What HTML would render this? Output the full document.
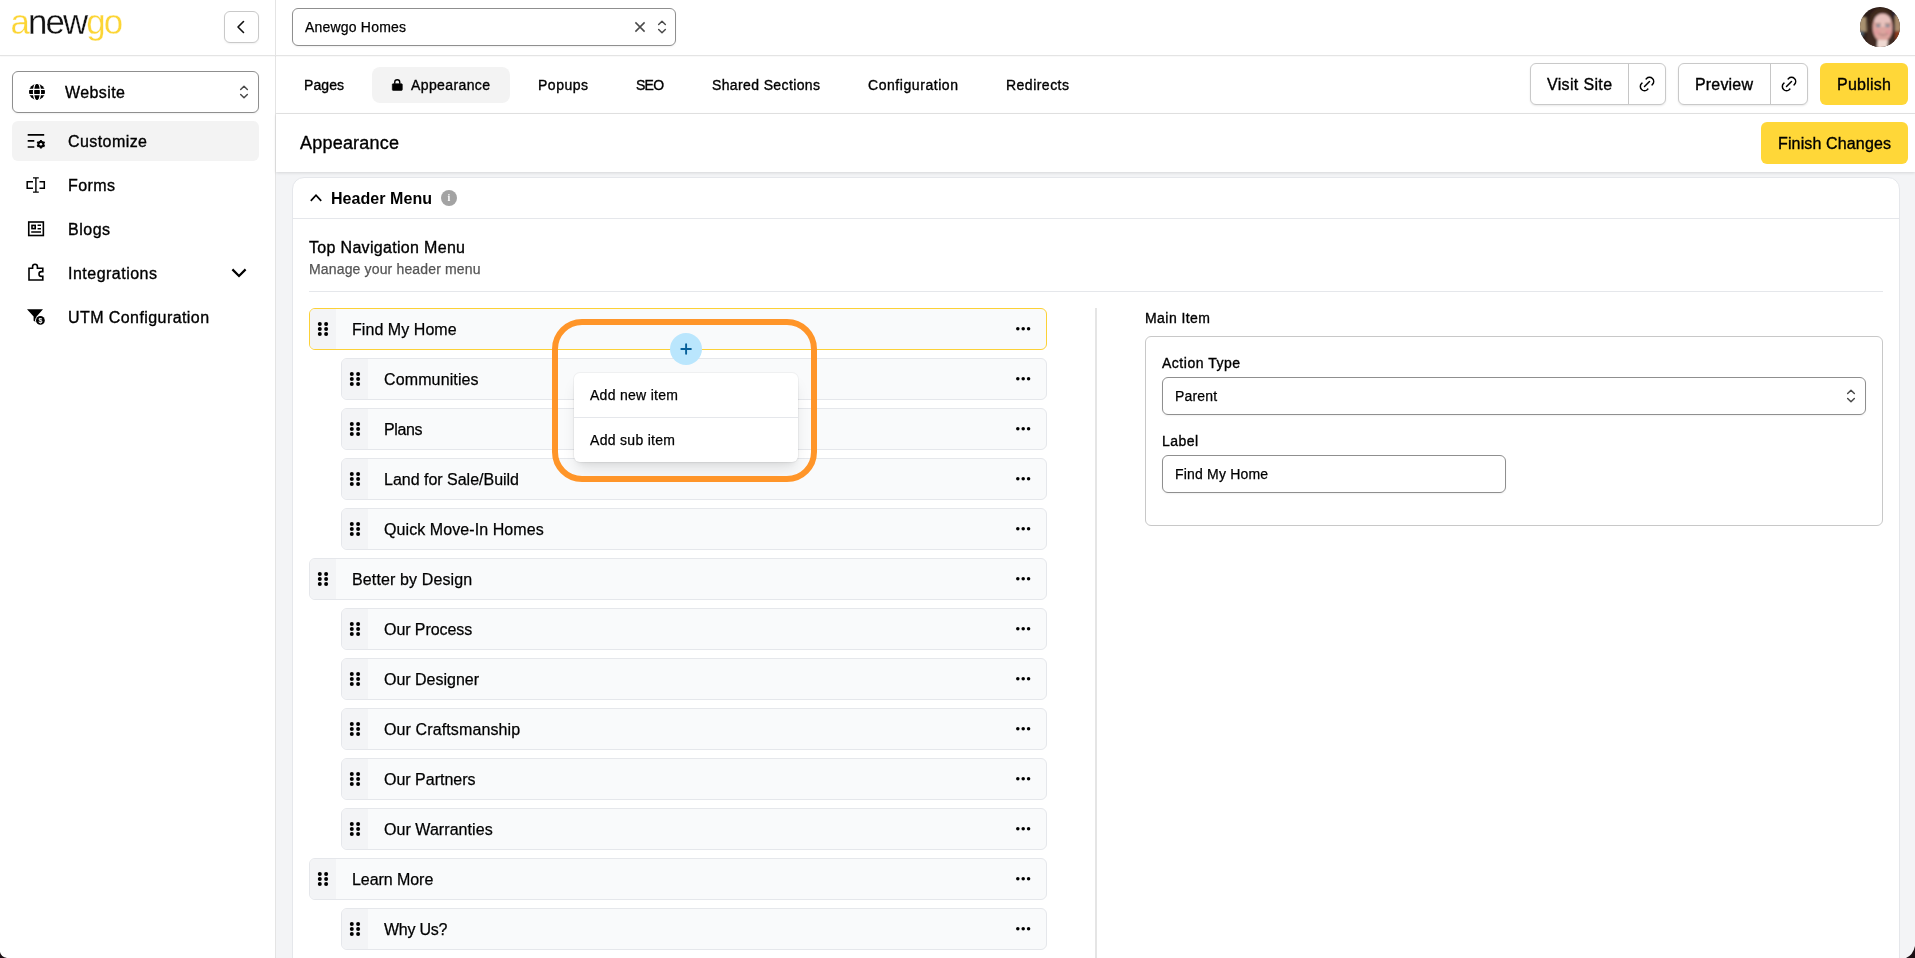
<!DOCTYPE html>
<html lang="en"><head><meta charset="utf-8"><title>Anewgo - Appearance</title>
<style>
*{box-sizing:border-box;margin:0;padding:0}
html,body{width:1915px;height:958px;overflow:hidden;background:#fff}
body{font-family:"Liberation Sans",sans-serif;color:#000;position:relative}
.t{position:absolute;white-space:nowrap;will-change:transform}
.abs{position:absolute}
.row{position:absolute;height:42px;background:#f9fafb;border:1px solid #e5e7eb;border-radius:6px;overflow:hidden}
.row .h{position:absolute;left:0;top:0;bottom:0;width:26px;background:#f3f4f6}
.row.sel{border-color:#fcd137}
svg{position:absolute;overflow:visible}
</style></head><body>

<div class="abs" style="left:276px;top:172px;width:1639px;height:786px;background:#f3f4f6"></div>
<div class="abs" style="left:292px;top:177px;width:1608px;height:800px;background:#fff;border:1px solid #e5e7eb;border-radius:12px"></div>
<div class="abs" style="left:293px;top:218px;width:1606px;height:1px;background:#e5e7eb"></div>
<div class="abs" style="left:0;top:0;width:276px;height:958px;background:#fff;border-right:1px solid #e4e4e4"></div>
<div class="abs" style="left:0;top:55px;width:1915px;height:1px;background:#e4e4e4;box-shadow:0 1px 1px rgba(0,0,0,.03)"></div>
<svg style="left:0;top:0;will-change:transform" width="140" height="56"><text x="10.5" y="34.4" font-family="Liberation Sans, sans-serif" font-size="34.8" textLength="112.5" lengthAdjust="spacing" stroke="#fff" stroke-width="0.3"><tspan fill="#fcd535">a</tspan><tspan fill="#111">new</tspan><tspan fill="#fcd535">go</tspan></text></svg>
<div class="abs" style="left:224px;top:11px;width:35px;height:32px;border:1px solid #c9c9c9;border-radius:6px;box-shadow:0 1px 2px rgba(0,0,0,.06);background:#fff"></div>
<svg style="left:233px;top:19px" width="16" height="16" viewBox="0 0 16 16"><path d="M10.5 2.5 L5 8 L10.5 13.5" fill="none" stroke="#111" stroke-width="1.6" stroke-linecap="round" stroke-linejoin="round"/></svg>
<div class="abs" style="left:12px;top:71px;width:247px;height:42px;border:1px solid #8f8f8f;border-radius:6px;box-shadow:0 1px 2px rgba(0,0,0,.06);background:#fff"></div>
<div class="t " style="left:65px;top:80.80px;font-size:16px;line-height:24px;letter-spacing:0.413px;-webkit-text-stroke:0.35px #000;color:#000;">Website</div>
<div class="abs" style="left:12px;top:121px;width:247px;height:40px;background:#f3f3f3;border-radius:6px"></div>
<div class="t " style="left:68px;top:129.80px;font-size:16px;line-height:24px;letter-spacing:0.425px;-webkit-text-stroke:0.35px #000;color:#000;">Customize</div>
<div class="t " style="left:68px;top:173.80px;font-size:16px;line-height:24px;letter-spacing:0.410px;-webkit-text-stroke:0.35px #000;color:#000;">Forms</div>
<div class="t " style="left:68px;top:217.80px;font-size:16px;line-height:24px;letter-spacing:0.500px;-webkit-text-stroke:0.35px #000;color:#000;">Blogs</div>
<div class="t " style="left:68px;top:261.80px;font-size:16px;line-height:24px;letter-spacing:0.491px;-webkit-text-stroke:0.35px #000;color:#000;">Integrations</div>
<div class="t " style="left:68px;top:305.80px;font-size:16px;line-height:24px;letter-spacing:0.422px;-webkit-text-stroke:0.35px #000;color:#000;">UTM Configuration</div>
<div class="abs" style="left:292px;top:8px;width:384px;height:38px;border:1px solid #8f8f8f;border-radius:6px;box-shadow:0 1px 2px rgba(0,0,0,.06);background:#fff"></div>
<div class="t " style="left:305px;top:17.30px;font-size:14px;line-height:21px;letter-spacing:0.196px;-webkit-text-stroke:0.25px #000;color:#000;">Anewgo Homes</div>
<svg style="left:1860px;top:7px" width="40" height="40" viewBox="0 0 40 40"><defs><clipPath id="av"><circle cx="20" cy="20" r="20"/></clipPath><filter id="bl" x="-20%" y="-20%" width="140%" height="140%"><feGaussianBlur stdDeviation="0.8"/></filter></defs><g clip-path="url(#av)"><rect width="40" height="40" fill="#2c1d18"/><g filter="url(#bl)"><rect x="-2" y="10" width="8.5" height="15" fill="#a8916f"/><rect x="-2" y="24" width="6" height="5" fill="#4a5a66"/><rect x="34.5" y="8" width="8" height="18" fill="#a98a6a"/><rect x="35" y="24" width="6" height="9" fill="#8a3a1e"/><rect x="32.8" y="5" width="1.8" height="22" fill="#1f2440"/><path d="M7 42 C5 24 8 3 21 2.5 C34 3 35 24 34 42Z" fill="#3f2a22"/><ellipse cx="22.6" cy="20.6" rx="9.9" ry="14.2" fill="#dda59f"/><ellipse cx="22.6" cy="13.5" rx="8.2" ry="6.5" fill="#e8c2bd"/><ellipse cx="17" cy="25" rx="3" ry="2.6" fill="#e09a9c"/><ellipse cx="28.5" cy="25" rx="3" ry="2.6" fill="#e09a9c"/><path d="M17.5 33 L28 33 L27 42 L17 42Z" fill="#efd9d2"/><path d="M12 22 Q12 6 22 5.5 Q33 6 33 22 L35 14 Q30 0 21 1 Q10 2 9 16Z" fill="#41291f"/><rect x="16" y="18.2" width="4.6" height="1.7" rx="0.8" fill="#5f7f95"/><rect x="25.2" y="18.2" width="4.6" height="1.7" rx="0.8" fill="#5f7f95"/><path d="M15.5 16.8 H21 M24.8 16.8 H30.2" stroke="#6b4a40" stroke-width="0.8"/><path d="M18.5 26.8 Q23 30.6 27.8 26.8 Q23 28.4 18.5 26.8Z" fill="#f6f0ee" stroke="#b47f7a" stroke-width="0.9"/></g></g></svg>
<div class="abs" style="left:276px;top:113px;width:1639px;height:1px;background:#e4e4e4"></div>
<div class="abs" style="left:372px;top:67px;width:138px;height:36px;background:#f3f3f3;border-radius:8px"></div>
<div class="t " style="left:304px;top:75.30px;font-size:14px;line-height:21px;letter-spacing:0.078px;-webkit-text-stroke:0.35px #000;color:#000;">Pages</div>
<div class="t " style="left:411px;top:75.30px;font-size:14px;line-height:21px;letter-spacing:0.386px;-webkit-text-stroke:0.35px #000;color:#000;">Appearance</div>
<div class="t " style="left:538px;top:75.30px;font-size:14px;line-height:21px;letter-spacing:0.508px;-webkit-text-stroke:0.35px #000;color:#000;">Popups</div>
<div class="t " style="left:636px;top:75.30px;font-size:14px;line-height:21px;letter-spacing:-0.770px;-webkit-text-stroke:0.35px #000;color:#000;">SEO</div>
<div class="t " style="left:712px;top:75.30px;font-size:14px;line-height:21px;letter-spacing:0.374px;-webkit-text-stroke:0.35px #000;color:#000;">Shared Sections</div>
<div class="t " style="left:868px;top:75.30px;font-size:14px;line-height:21px;letter-spacing:0.558px;-webkit-text-stroke:0.35px #000;color:#000;">Configuration</div>
<div class="t " style="left:1006px;top:75.30px;font-size:14px;line-height:21px;letter-spacing:0.481px;-webkit-text-stroke:0.35px #000;color:#000;">Redirects</div>
<div class="abs" style="left:1530px;top:63px;width:136px;height:42px;border:1px solid #c9c9c9;border-radius:6px;box-shadow:0 1px 2px rgba(0,0,0,.09);background:#fff;"></div>
<div class="abs" style="left:1628px;top:64px;width:1px;height:40px;background:#c6c6c6"></div>
<div class="abs" style="left:1678px;top:63px;width:130px;height:42px;border:1px solid #c9c9c9;border-radius:6px;box-shadow:0 1px 2px rgba(0,0,0,.09);background:#fff;"></div>
<div class="abs" style="left:1770px;top:64px;width:1px;height:40px;background:#c6c6c6"></div>
<div class="abs" style="left:1820px;top:63px;width:88px;height:42px;border-radius:6px;background:#ffd738"></div>
<div class="t " style="left:1547px;top:72.80px;font-size:16px;line-height:24px;letter-spacing:0.342px;-webkit-text-stroke:0.35px #000;color:#000;">Visit Site</div>
<div class="t " style="left:1695px;top:72.80px;font-size:16px;line-height:24px;letter-spacing:0.173px;-webkit-text-stroke:0.35px #000;color:#000;">Preview</div>
<div class="t " style="left:1837px;top:72.80px;font-size:16px;line-height:24px;letter-spacing:0.253px;-webkit-text-stroke:0.35px #000;color:#000;">Publish</div>
<div class="abs" style="left:276px;top:114px;width:1639px;height:58px;background:#fff;box-shadow:0 1px 3px rgba(0,0,0,.12)"></div>
<div class="t " style="left:300px;top:130.30px;font-size:18px;line-height:27px;letter-spacing:0.210px;-webkit-text-stroke:0.35px #000;color:#000;">Appearance</div>
<div class="abs" style="left:1761px;top:122px;width:147px;height:42px;border-radius:6px;background:#ffd738"></div>
<div class="t " style="left:1778px;top:131.80px;font-size:16px;line-height:24px;letter-spacing:0.138px;-webkit-text-stroke:0.35px #000;color:#000;">Finish Changes</div>
<svg style="left:29px;top:84px" width="16" height="16" viewBox="0 0 16 16"><circle cx="8" cy="7.9" r="8" fill="#000"/><g stroke="#fff" stroke-width="1.25" fill="none"><path d="M-1 5.35H17M-1 10.5H17"/><ellipse cx="8" cy="7.9" rx="3.5" ry="9.2"/></g></svg>
<svg style="left:234px;top:82px" width="20" height="20" viewBox="0 0 24 24"><path d="M8 9l4 -4l4 4M16 15l-4 4l-4 -4" fill="none" stroke="#4a4a4a" stroke-width="1.75" stroke-linecap="round" stroke-linejoin="round"/></svg>
<svg style="left:27px;top:133px" width="19" height="16" viewBox="0 0 19 16"><path d="M0.7 1.8H17.2M0.7 7.9H7.3M0.7 14H7.3" stroke="#000" stroke-width="1.7" fill="none"/><g transform="translate(13.9,11.2)"><circle r="2.6" fill="none" stroke="#000" stroke-width="1.9"/><path d="M0 -4.3V4.3M-3.72 -2.15L3.72 2.15M-3.72 2.15L3.72 -2.15" stroke="#000" stroke-width="1.9"/><circle r="1.3" fill="#f3f3f3"/></g></svg>
<svg style="left:26px;top:177px" width="20" height="16" viewBox="0 0 20 16"><g fill="none" stroke="#000" stroke-width="1.5"><path d="M7 4.7H1.2V11.3H7M13.5 4.7H18.3V11.3H13.5"/><path d="M9.9 0.8V15.2M7 0.9H12.8M7 15.1H12.8" stroke-width="1.4"/></g></svg>
<svg style="left:27px;top:220.3px" width="18" height="17" viewBox="0 0 18 17"><g fill="none" stroke="#000"><rect x="1.75" y="2" width="14.6" height="13.5" stroke-width="1.6"/><rect x="5" y="5.4" width="3.2" height="3.2" stroke-width="1.6"/><path d="M10.6 5.3H14M10.6 8.8H14M4.2 12H14" stroke-width="1.4"/></g></svg>
<svg style="left:27px;top:263px" width="18" height="18" viewBox="0 0 18 18"><path d="M2 17 V5.2 H5.6 V3.6 A2.4 2.4 0 0 1 10.4 3.6 V5.2 H15.8 V8.6 H14.4 A2.4 2.4 0 0 0 14.4 13.4 H15.8 V17 Z" fill="none" stroke="#000" stroke-width="1.6" stroke-linejoin="miter"/></svg>
<svg style="left:231px;top:267px" width="16" height="12" viewBox="0 0 16 12"><path d="M1.4 2.4 L8 9 L14.6 2.4" fill="none" stroke="#000" stroke-width="2.2"/></svg>
<svg style="will-change:transform;left:26px;top:308px" width="20" height="18" viewBox="0 0 20 18"><path d="M1 1.3 H17 L10.6 8.6 V14.6 L7.6 12.8 V8.6 Z" fill="#000"/><circle cx="14.4" cy="12.4" r="5.3" fill="#fff"/><circle cx="14.4" cy="12.4" r="4.4" fill="#000"/><text x="14.4" y="15" font-size="7" font-weight="700" fill="#fff" text-anchor="middle" font-family="Liberation Sans, sans-serif">$</text></svg>
<svg style="left:634px;top:21px" width="12" height="12" viewBox="0 0 12 12"><path d="M1.4 1.4 L10.6 10.6 M10.6 1.4 L1.4 10.6" fill="none" stroke="#4a4a4a" stroke-width="1.5"/></svg>
<svg style="left:652px;top:17px" width="20" height="20" viewBox="0 0 24 24"><path d="M8 9l4 -4l4 4M16 15l-4 4l-4 -4" fill="none" stroke="#4a4a4a" stroke-width="1.75" stroke-linecap="round" stroke-linejoin="round"/></svg>
<svg style="left:391px;top:78px" width="13" height="14" viewBox="0 0 13 14"><rect x="1.3" y="5.7" width="10" height="6.7" rx="0.9" fill="#000" stroke="#000" stroke-width="0.6"/><path d="M3.75 5.8 V4.25 A2.5 2.5 0 0 1 8.75 4.25 V5.8" fill="none" stroke="#000" stroke-width="1.4"/></svg>
<svg style="left:1637px;top:74px" width="20" height="20" viewBox="0 0 24 24"><g fill="none" stroke="#000" stroke-width="1.8" stroke-linecap="round" stroke-linejoin="round"><path d="M9 15l6 -6"/><path d="M11 6l.463 -.536a5 5 0 0 1 7.071 7.072l-.534 .464"/><path d="M13 18l-.397 .534a5.068 5.068 0 0 1 -7.127 0a4.972 4.972 0 0 1 0 -7.071l.524 -.463"/></g></svg>
<svg style="left:1779px;top:74px" width="20" height="20" viewBox="0 0 24 24"><g fill="none" stroke="#000" stroke-width="1.8" stroke-linecap="round" stroke-linejoin="round"><path d="M9 15l6 -6"/><path d="M11 6l.463 -.536a5 5 0 0 1 7.071 7.072l-.534 .464"/><path d="M13 18l-.397 .534a5.068 5.068 0 0 1 -7.127 0a4.972 4.972 0 0 1 0 -7.071l.524 -.463"/></g></svg>
<svg style="left:308px;top:190px" width="16" height="16" viewBox="0 0 16 16"><path d="M2.8 10.8 L8 5.2 L13.2 10.8" fill="none" stroke="#000" stroke-width="1.7"/></svg>
<div class="abs" style="left:441px;top:190px;width:16px;height:16px;border-radius:50%;background:#a3a3a3"></div>
<div class="t" style="left:441px;top:190px;width:16px;height:16px;line-height:16px;text-align:center;font-family:'Liberation Serif',serif;font-weight:700;font-size:10px;color:#fff">i</div>
<div class="t " style="left:331px;top:186.80px;font-size:16px;line-height:24px;letter-spacing:0.052px;font-weight:700;color:#000;">Header Menu</div>
<div class="t " style="left:309px;top:235.80px;font-size:16px;line-height:24px;letter-spacing:0.316px;-webkit-text-stroke:0.35px #000;color:#000;">Top Navigation Menu</div>
<div class="t " style="left:309px;top:259.30px;font-size:14px;line-height:21px;letter-spacing:0.153px;-webkit-text-stroke:0.25px #555;color:#555;">Manage your header menu</div>
<div class="abs" style="left:309px;top:291px;width:1574px;height:1px;background:#e5e7eb"></div>
<div class="abs" style="left:1095px;top:308px;width:2px;height:650px;background:#e5e5e5"></div>
<div class="row sel" style="left:309px;top:308px;width:738px"><div class="h"></div><svg style="left:7px;top:13px" width="12" height="14" viewBox="0 0 12 14"><circle cx="2.8" cy="1.9" r="2"/><circle cx="2.8" cy="7" r="2"/><circle cx="2.8" cy="12.1" r="2"/><circle cx="9.1" cy="1.9" r="2"/><circle cx="9.1" cy="7" r="2"/><circle cx="9.1" cy="12.1" r="2"/></svg><svg style="right:16px;top:17.9px" width="14.4" height="3.6" viewBox="0 0 14.4 3.6"><circle cx="1.8" cy="1.8" r="1.75"/><circle cx="7.2" cy="1.8" r="1.75"/><circle cx="12.6" cy="1.8" r="1.75"/></svg></div>
<div class="t " style="left:352.35px;top:317.80px;font-size:16px;line-height:24px;letter-spacing:0.055px;-webkit-text-stroke:0.25px #000;color:#000;">Find My Home</div>
<div class="row" style="left:341px;top:358px;width:706px"><div class="h"></div><svg style="left:7px;top:13px" width="12" height="14" viewBox="0 0 12 14"><circle cx="2.8" cy="1.9" r="2"/><circle cx="2.8" cy="7" r="2"/><circle cx="2.8" cy="12.1" r="2"/><circle cx="9.1" cy="1.9" r="2"/><circle cx="9.1" cy="7" r="2"/><circle cx="9.1" cy="12.1" r="2"/></svg><svg style="right:16px;top:17.9px" width="14.4" height="3.6" viewBox="0 0 14.4 3.6"><circle cx="1.8" cy="1.8" r="1.75"/><circle cx="7.2" cy="1.8" r="1.75"/><circle cx="12.6" cy="1.8" r="1.75"/></svg></div>
<div class="t " style="left:384.35px;top:367.80px;font-size:16px;line-height:24px;letter-spacing:0.124px;-webkit-text-stroke:0.25px #000;color:#000;">Communities</div>
<div class="row" style="left:341px;top:408px;width:706px"><div class="h"></div><svg style="left:7px;top:13px" width="12" height="14" viewBox="0 0 12 14"><circle cx="2.8" cy="1.9" r="2"/><circle cx="2.8" cy="7" r="2"/><circle cx="2.8" cy="12.1" r="2"/><circle cx="9.1" cy="1.9" r="2"/><circle cx="9.1" cy="7" r="2"/><circle cx="9.1" cy="12.1" r="2"/></svg><svg style="right:16px;top:17.9px" width="14.4" height="3.6" viewBox="0 0 14.4 3.6"><circle cx="1.8" cy="1.8" r="1.75"/><circle cx="7.2" cy="1.8" r="1.75"/><circle cx="12.6" cy="1.8" r="1.75"/></svg></div>
<div class="t " style="left:384.35px;top:417.80px;font-size:16px;line-height:24px;letter-spacing:-0.375px;-webkit-text-stroke:0.25px #000;color:#000;">Plans</div>
<div class="row" style="left:341px;top:458px;width:706px"><div class="h"></div><svg style="left:7px;top:13px" width="12" height="14" viewBox="0 0 12 14"><circle cx="2.8" cy="1.9" r="2"/><circle cx="2.8" cy="7" r="2"/><circle cx="2.8" cy="12.1" r="2"/><circle cx="9.1" cy="1.9" r="2"/><circle cx="9.1" cy="7" r="2"/><circle cx="9.1" cy="12.1" r="2"/></svg><svg style="right:16px;top:17.9px" width="14.4" height="3.6" viewBox="0 0 14.4 3.6"><circle cx="1.8" cy="1.8" r="1.75"/><circle cx="7.2" cy="1.8" r="1.75"/><circle cx="12.6" cy="1.8" r="1.75"/></svg></div>
<div class="t " style="left:384.35px;top:467.80px;font-size:16px;line-height:24px;letter-spacing:-0.011px;-webkit-text-stroke:0.25px #000;color:#000;">Land for Sale/Build</div>
<div class="row" style="left:341px;top:508px;width:706px"><div class="h"></div><svg style="left:7px;top:13px" width="12" height="14" viewBox="0 0 12 14"><circle cx="2.8" cy="1.9" r="2"/><circle cx="2.8" cy="7" r="2"/><circle cx="2.8" cy="12.1" r="2"/><circle cx="9.1" cy="1.9" r="2"/><circle cx="9.1" cy="7" r="2"/><circle cx="9.1" cy="12.1" r="2"/></svg><svg style="right:16px;top:17.9px" width="14.4" height="3.6" viewBox="0 0 14.4 3.6"><circle cx="1.8" cy="1.8" r="1.75"/><circle cx="7.2" cy="1.8" r="1.75"/><circle cx="12.6" cy="1.8" r="1.75"/></svg></div>
<div class="t " style="left:384.35px;top:517.80px;font-size:16px;line-height:24px;letter-spacing:0.076px;-webkit-text-stroke:0.25px #000;color:#000;">Quick Move-In Homes</div>
<div class="row" style="left:309px;top:558px;width:738px"><div class="h"></div><svg style="left:7px;top:13px" width="12" height="14" viewBox="0 0 12 14"><circle cx="2.8" cy="1.9" r="2"/><circle cx="2.8" cy="7" r="2"/><circle cx="2.8" cy="12.1" r="2"/><circle cx="9.1" cy="1.9" r="2"/><circle cx="9.1" cy="7" r="2"/><circle cx="9.1" cy="12.1" r="2"/></svg><svg style="right:16px;top:17.9px" width="14.4" height="3.6" viewBox="0 0 14.4 3.6"><circle cx="1.8" cy="1.8" r="1.75"/><circle cx="7.2" cy="1.8" r="1.75"/><circle cx="12.6" cy="1.8" r="1.75"/></svg></div>
<div class="t " style="left:352.35px;top:567.80px;font-size:16px;line-height:24px;letter-spacing:0.125px;-webkit-text-stroke:0.25px #000;color:#000;">Better by Design</div>
<div class="row" style="left:341px;top:608px;width:706px"><div class="h"></div><svg style="left:7px;top:13px" width="12" height="14" viewBox="0 0 12 14"><circle cx="2.8" cy="1.9" r="2"/><circle cx="2.8" cy="7" r="2"/><circle cx="2.8" cy="12.1" r="2"/><circle cx="9.1" cy="1.9" r="2"/><circle cx="9.1" cy="7" r="2"/><circle cx="9.1" cy="12.1" r="2"/></svg><svg style="right:16px;top:17.9px" width="14.4" height="3.6" viewBox="0 0 14.4 3.6"><circle cx="1.8" cy="1.8" r="1.75"/><circle cx="7.2" cy="1.8" r="1.75"/><circle cx="12.6" cy="1.8" r="1.75"/></svg></div>
<div class="t " style="left:384.35px;top:617.80px;font-size:16px;line-height:24px;letter-spacing:-0.068px;-webkit-text-stroke:0.25px #000;color:#000;">Our Process</div>
<div class="row" style="left:341px;top:658px;width:706px"><div class="h"></div><svg style="left:7px;top:13px" width="12" height="14" viewBox="0 0 12 14"><circle cx="2.8" cy="1.9" r="2"/><circle cx="2.8" cy="7" r="2"/><circle cx="2.8" cy="12.1" r="2"/><circle cx="9.1" cy="1.9" r="2"/><circle cx="9.1" cy="7" r="2"/><circle cx="9.1" cy="12.1" r="2"/></svg><svg style="right:16px;top:17.9px" width="14.4" height="3.6" viewBox="0 0 14.4 3.6"><circle cx="1.8" cy="1.8" r="1.75"/><circle cx="7.2" cy="1.8" r="1.75"/><circle cx="12.6" cy="1.8" r="1.75"/></svg></div>
<div class="t " style="left:384.35px;top:667.80px;font-size:16px;line-height:24px;letter-spacing:-0.011px;-webkit-text-stroke:0.25px #000;color:#000;">Our Designer</div>
<div class="row" style="left:341px;top:708px;width:706px"><div class="h"></div><svg style="left:7px;top:13px" width="12" height="14" viewBox="0 0 12 14"><circle cx="2.8" cy="1.9" r="2"/><circle cx="2.8" cy="7" r="2"/><circle cx="2.8" cy="12.1" r="2"/><circle cx="9.1" cy="1.9" r="2"/><circle cx="9.1" cy="7" r="2"/><circle cx="9.1" cy="12.1" r="2"/></svg><svg style="right:16px;top:17.9px" width="14.4" height="3.6" viewBox="0 0 14.4 3.6"><circle cx="1.8" cy="1.8" r="1.75"/><circle cx="7.2" cy="1.8" r="1.75"/><circle cx="12.6" cy="1.8" r="1.75"/></svg></div>
<div class="t " style="left:384.35px;top:717.80px;font-size:16px;line-height:24px;letter-spacing:0.116px;-webkit-text-stroke:0.25px #000;color:#000;">Our Craftsmanship</div>
<div class="row" style="left:341px;top:758px;width:706px"><div class="h"></div><svg style="left:7px;top:13px" width="12" height="14" viewBox="0 0 12 14"><circle cx="2.8" cy="1.9" r="2"/><circle cx="2.8" cy="7" r="2"/><circle cx="2.8" cy="12.1" r="2"/><circle cx="9.1" cy="1.9" r="2"/><circle cx="9.1" cy="7" r="2"/><circle cx="9.1" cy="12.1" r="2"/></svg><svg style="right:16px;top:17.9px" width="14.4" height="3.6" viewBox="0 0 14.4 3.6"><circle cx="1.8" cy="1.8" r="1.75"/><circle cx="7.2" cy="1.8" r="1.75"/><circle cx="12.6" cy="1.8" r="1.75"/></svg></div>
<div class="t " style="left:384.35px;top:767.80px;font-size:16px;line-height:24px;letter-spacing:0.000px;-webkit-text-stroke:0.25px #000;color:#000;">Our Partners</div>
<div class="row" style="left:341px;top:808px;width:706px"><div class="h"></div><svg style="left:7px;top:13px" width="12" height="14" viewBox="0 0 12 14"><circle cx="2.8" cy="1.9" r="2"/><circle cx="2.8" cy="7" r="2"/><circle cx="2.8" cy="12.1" r="2"/><circle cx="9.1" cy="1.9" r="2"/><circle cx="9.1" cy="7" r="2"/><circle cx="9.1" cy="12.1" r="2"/></svg><svg style="right:16px;top:17.9px" width="14.4" height="3.6" viewBox="0 0 14.4 3.6"><circle cx="1.8" cy="1.8" r="1.75"/><circle cx="7.2" cy="1.8" r="1.75"/><circle cx="12.6" cy="1.8" r="1.75"/></svg></div>
<div class="t " style="left:384.35px;top:817.80px;font-size:16px;line-height:24px;letter-spacing:0.058px;-webkit-text-stroke:0.25px #000;color:#000;">Our Warranties</div>
<div class="row" style="left:309px;top:858px;width:738px"><div class="h"></div><svg style="left:7px;top:13px" width="12" height="14" viewBox="0 0 12 14"><circle cx="2.8" cy="1.9" r="2"/><circle cx="2.8" cy="7" r="2"/><circle cx="2.8" cy="12.1" r="2"/><circle cx="9.1" cy="1.9" r="2"/><circle cx="9.1" cy="7" r="2"/><circle cx="9.1" cy="12.1" r="2"/></svg><svg style="right:16px;top:17.9px" width="14.4" height="3.6" viewBox="0 0 14.4 3.6"><circle cx="1.8" cy="1.8" r="1.75"/><circle cx="7.2" cy="1.8" r="1.75"/><circle cx="12.6" cy="1.8" r="1.75"/></svg></div>
<div class="t " style="left:352.35px;top:867.80px;font-size:16px;line-height:24px;letter-spacing:-0.060px;-webkit-text-stroke:0.25px #000;color:#000;">Learn More</div>
<div class="row" style="left:341px;top:908px;width:706px"><div class="h"></div><svg style="left:7px;top:13px" width="12" height="14" viewBox="0 0 12 14"><circle cx="2.8" cy="1.9" r="2"/><circle cx="2.8" cy="7" r="2"/><circle cx="2.8" cy="12.1" r="2"/><circle cx="9.1" cy="1.9" r="2"/><circle cx="9.1" cy="7" r="2"/><circle cx="9.1" cy="12.1" r="2"/></svg><svg style="right:16px;top:17.9px" width="14.4" height="3.6" viewBox="0 0 14.4 3.6"><circle cx="1.8" cy="1.8" r="1.75"/><circle cx="7.2" cy="1.8" r="1.75"/><circle cx="12.6" cy="1.8" r="1.75"/></svg></div>
<div class="t " style="left:384.35px;top:917.80px;font-size:16px;line-height:24px;letter-spacing:-0.263px;-webkit-text-stroke:0.25px #000;color:#000;">Why Us?</div>
<div class="t " style="left:1145px;top:308.30px;font-size:14px;line-height:21px;letter-spacing:0.442px;-webkit-text-stroke:0.35px #000;color:#000;">Main Item</div>
<div class="abs" style="left:1145px;top:336px;width:738px;height:190px;border:1px solid #c8c8c8;border-radius:6px"></div>
<div class="t " style="left:1162px;top:353.30px;font-size:14px;line-height:21px;letter-spacing:0.513px;-webkit-text-stroke:0.35px #000;color:#000;">Action Type</div>
<div class="abs" style="left:1162px;top:377px;width:704px;height:38px;border:1px solid #8f8f8f;border-radius:6px;box-shadow:0 1px 2px rgba(0,0,0,.06);background:#fff"></div>
<div class="t " style="left:1175px;top:386.30px;font-size:14px;line-height:21px;letter-spacing:0.154px;-webkit-text-stroke:0.25px #000;color:#000;">Parent</div>
<div class="t " style="left:1162px;top:431.30px;font-size:14px;line-height:21px;letter-spacing:0.443px;-webkit-text-stroke:0.35px #000;color:#000;">Label</div>
<div class="abs" style="left:1162px;top:455px;width:344px;height:38px;border:1px solid #8f8f8f;border-radius:6px;box-shadow:0 1px 2px rgba(0,0,0,.06);background:#fff"></div>
<div class="t " style="left:1175px;top:464.30px;font-size:14px;line-height:21px;letter-spacing:0.182px;-webkit-text-stroke:0.25px #000;color:#000;">Find My Home</div>
<svg style="left:1841px;top:386px" width="20" height="20" viewBox="0 0 24 24"><path d="M8 9l4 -4l4 4M16 15l-4 4l-4 -4" fill="none" stroke="#4a4a4a" stroke-width="1.75" stroke-linecap="round" stroke-linejoin="round"/></svg>
<div class="abs" style="left:574px;top:372.5px;width:224px;height:89.5px;background:#fff;border-radius:6px;box-shadow:0 10px 15px -3px rgba(0,0,0,.1),0 4px 6px -4px rgba(0,0,0,.1),0 0 0 1px rgba(0,0,0,.04)"></div>
<div class="abs" style="left:574px;top:417px;width:224px;height:1px;background:#e5e7eb"></div>
<div class="t " style="left:590px;top:385.30px;font-size:14px;line-height:21px;letter-spacing:0.287px;-webkit-text-stroke:0.25px #000;color:#000;">Add new item</div>
<div class="t " style="left:590px;top:430.30px;font-size:14px;line-height:21px;letter-spacing:0.301px;-webkit-text-stroke:0.25px #000;color:#000;">Add sub item</div>
<div class="abs" style="left:670px;top:333px;width:32px;height:32px;border-radius:50%;background:#bae6fd"></div>
<svg style="left:680px;top:343px" width="12" height="12" viewBox="0 0 12 12"><path d="M6.1 1.2V10.8M1.3 6H10.9" stroke="#07609a" stroke-width="1.9" stroke-linecap="round" fill="none"/></svg>
<div class="abs" style="left:552.4px;top:319px;width:265px;height:162.6px;border:6px solid #ff9529;border-radius:30px"></div>
<svg style="left:0;top:948px" width="10" height="10"><path d="M0 4 Q1 9 7 10 L0 10Z" fill="#1a0f14"/></svg>
<svg style="left:1903px;top:944px" width="12" height="14"><path d="M12 2 Q10 11 3 14 L12 14Z" fill="#1a0f14"/></svg>
</body></html>
